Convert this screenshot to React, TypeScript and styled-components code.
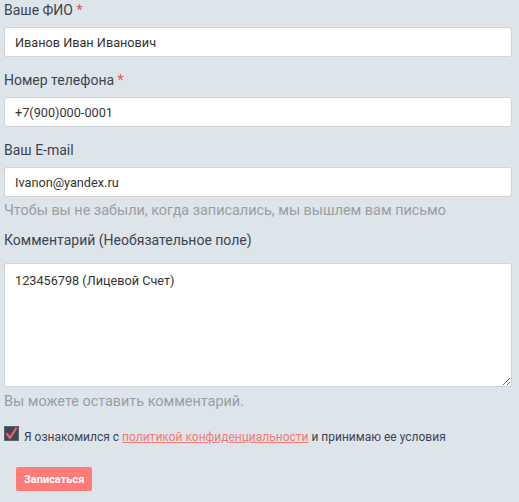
import styled, { createGlobalStyle } from "styled-components";

const GlobalStyle = createGlobalStyle`
  html, body {
    margin: 0;
    padding: 0;
    background: #dde4ea;
  }
  body {
    font-family: Roboto, "Liberation Sans", sans-serif;
  }
`;

const Form = styled.form`
  width: 508px;
  padding: 0 0 0 4px;
  display: flex;
  flex-direction: column;
`;

const Field = styled.div<{ $gap?: number }>`
  display: flex;
  flex-direction: column;
  margin-bottom: ${(p) => p.$gap ?? 13}px;
`;

const Label = styled.label`
  font-size: 14px;
  line-height: 20px;
  color: #3e4552;
  margin-bottom: 7px;
`;

const Star = styled.span`
  color: #e0574f;
`;

const Input = styled.input`
  box-sizing: border-box;
  width: 100%;
  height: 30px;
  border: 1px solid #cdd4da;
  border-radius: 3px;
  background: #fff;
  padding: 0 10px;
  font-family: inherit;
  font-size: 12.7px;
  color: #333;
  outline: none;
`;

const TextArea = styled.textarea`
  box-sizing: border-box;
  width: 100%;
  height: 124px;
  margin-top: 6px;
  border: 1px solid #cdd4da;
  border-radius: 3px;
  background: #fff;
  padding: 8px 10px;
  font-family: inherit;
  font-size: 12.7px;
  line-height: 17px;
  color: #333;
  outline: none;
  display: block;
`;

const Hint = styled.div<{ $top?: number }>`
  font-size: 14.4px;
  line-height: 18px;
  color: #9a9ea3;
  margin-top: ${(p) => p.$top ?? 5}px;
`;

const CheckRow = styled.div`
  display: flex;
  align-items: flex-start;
  gap: 5px;
  margin-top: 15px;
  font-size: 12px;
  line-height: 15px;
  color: #3e4552;
`;

const CheckText = styled.span`
  padding-top: 4px;
`;

const Box = styled.span`
  width: 15px;
  height: 15px;
  box-sizing: border-box;
  background: #3d4757;
  border: 1px solid #5b6675;
  display: inline-flex;
  align-items: center;
  justify-content: center;
  flex-shrink: 0;
`;

const Link = styled.a`
  color: #f07d78;
  text-decoration: underline;
`;

const Button = styled.button`
  align-self: flex-start;
  margin: 22px 0 0 12px;
  height: 24px;
  padding: 0 8px;
  border: none;
  border-radius: 2px;
  background: #ff7b7a;
  color: #fff;
  font-family: inherit;
  font-weight: 700;
  font-size: 11px;
  cursor: pointer;
`;

const App = () => {
  return (
    <>
      <GlobalStyle />
      <Form onSubmit={(e) => e.preventDefault()}>
        <Field>
          <Label>
            Ваше ФИО <Star>*</Star>
          </Label>
          <Input defaultValue="Иванов Иван Иванович" />
        </Field>
        <Field>
          <Label>
            Номер телефона <Star>*</Star>
          </Label>
          <Input defaultValue="+7(900)000-0001" />
        </Field>
        <Field $gap={10}>
          <Label>Ваш E-mail</Label>
          <Input defaultValue="Ivanon@yandex.ru" />
          <Hint>Чтобы вы не забыли, когда записались, мы вышлем вам письмо</Hint>
        </Field>
        <Field $gap={0}>
          <Label>Комментарий (Необязательное поле)</Label>
          <TextArea defaultValue="123456798 (Лицевой Счет)" />
          <Hint $top={6}>Вы можете оставить комментарий.</Hint>
        </Field>
        <CheckRow>
          <Box>
            <svg width="13" height="13" viewBox="0 0 13 13">
              <path
                d="M2 7 L5 11 L11 1.5"
                fill="none"
                stroke="#f0625e"
                strokeWidth="2.2"
                strokeLinecap="round"
                strokeLinejoin="round"
              />
            </svg>
          </Box>
          <CheckText>
            Я ознакомился с <Link href="#">политикой конфиденциальности</Link> и
            принимаю ее условия
          </CheckText>
        </CheckRow>
        <Button type="submit">Записаться</Button>
      </Form>
    </>
  );
};

export default App;
